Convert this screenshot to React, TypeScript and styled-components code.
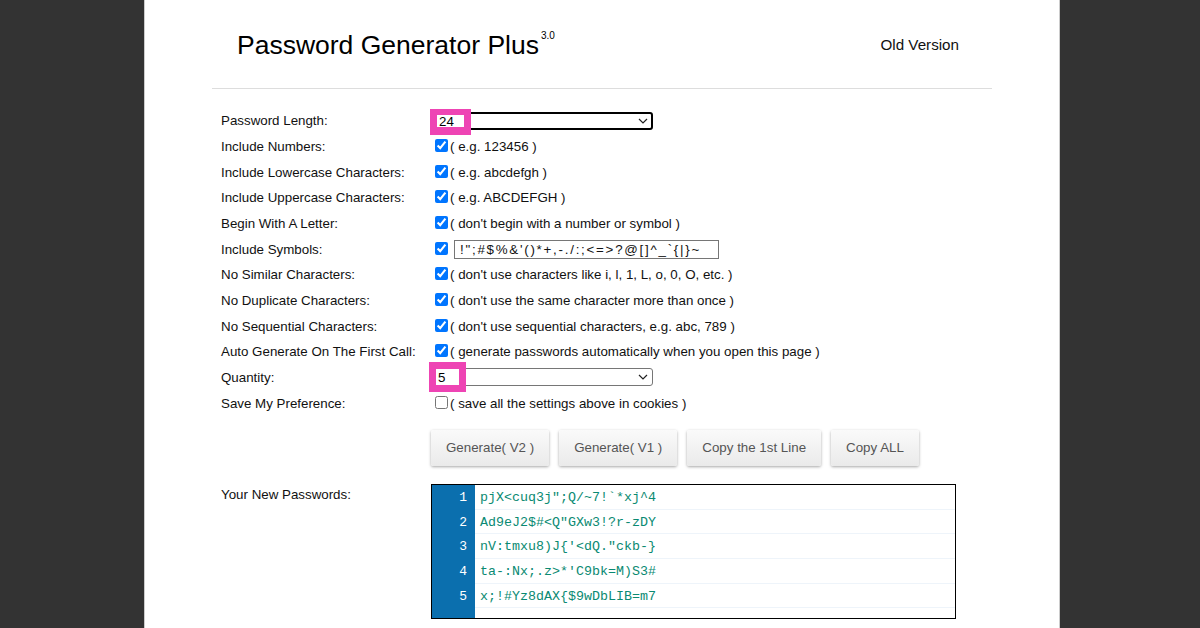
import styled, { createGlobalStyle } from "styled-components";

const GlobalStyle = createGlobalStyle`
  html, body {
    margin: 0;
    height: 628px;
    overflow: hidden;
    background: #333;
  }
`;

const Page = styled.div`
  position: relative;
  width: 916px;
  height: 628px;
  margin-left: 144px;
  padding: 0 67px;
  box-sizing: border-box;
  background: #fff;
  border-left: 1px solid #ccc;
  border-right: 1px solid #ccc;
  overflow: hidden;
  font-family: "Liberation Sans", Arial, sans-serif;
  font-size: 13.33px;
  color: #111;
`;
const Header = styled.header`
  height: 89px;
  display: flex;
  justify-content: space-between;
  align-items: center;
  padding: 2px 33px 0 25px;
  box-sizing: border-box;
  border-bottom: 1px solid #ddd;
`;
const Title = styled.h1`
  margin: 0;
  font-size: 26.5px;
  font-weight: 400;
  color: #000;
  sup {
    font-size: 10px;
    vertical-align: 15px;
    line-height: 0;
    margin-left: 2px;
  }
`;
const OldLink = styled.a`
  font-size: 15.2px;
  color: #111;
  margin-bottom: 2px;
`;
const Form = styled.div`
  display: grid;
  grid-template-columns: 210px 1fr;
  grid-auto-rows: 25.67px;
  margin-top: 19px;
  padding-left: 9px;
  align-items: center;
`;
const Label = styled.div`
  white-space: nowrap;
`;
const Control = styled.label`
  display: flex;
  align-items: center;
  gap: 2px;
  padding-left: 4px;
  white-space: nowrap;
`;
const Check = styled.input.attrs({ type: "checkbox" })`
  width: 13px;
  height: 13px;
  margin: 0 0 2px;
  accent-color: #0075ff;
`;
const SelectWrap = styled.div`
  position: relative;
  width: 222px;
  height: 18px;
  margin-left: -4px;
  svg {
    position: absolute;
    right: 5px;
    top: 6px;
  }
`;
const Select = styled.select<{ $focus?: boolean }>`
  display: block;
  appearance: none;
  width: 100%;
  height: 100%;
  box-sizing: border-box;
  padding: 0;
  background: #fff;
  font: 13.33px "Liberation Sans", Arial, sans-serif;
  border-radius: 3px;
  border: ${(p) => (p.$focus ? "2px solid #000" : "1px solid #767676")};
`;
const SymbolInput = styled.input`
  width: 265px;
  height: 19px;
  box-sizing: border-box;
  margin-left: 4px;
  padding: 0 5px;
  border: 1px solid #767676;
  font: 13.33px "Liberation Sans", Arial, sans-serif;
  letter-spacing: 1.75px;
  color: #111;
`;
const Marker = styled.div<{ $x: number; $y: number; $w: number; $h: number; $border: string }>`
  position: absolute;
  left: ${(p) => p.$x}px;
  top: ${(p) => p.$y}px;
  width: ${(p) => p.$w}px;
  height: ${(p) => p.$h}px;
  box-sizing: border-box;
  display: flex;
  align-items: center;
  border: solid #ee44b4;
  border-width: ${(p) => p.$border};
  background: #fff;
  font-size: 13.33px;
  color: #000;
  padding-left: 2px;
`;
const Buttons = styled.div`
  display: flex;
  gap: 10px;
  margin: 14px 0 0 210px;
  padding-left: 9px;
`;
const Button = styled.button`
  height: 36px;
  padding: 0 15px;
  border: 0;
  border-radius: 2px;
  background: linear-gradient(#fafafa, #eaeaea);
  box-shadow: 0 1px 3px rgba(0, 0, 0, 0.35);
  font: 13.33px "Liberation Sans", Arial, sans-serif;
  color: #555;
`;
const Result = styled.div`
  display: grid;
  grid-template-columns: 210px 525px;
  margin-top: 18px;
  padding-left: 9px;
`;
const ResultLabel = styled.div`
  margin-top: 3px;
`;
const Output = styled.div`
  display: grid;
  grid-template-columns: 43px 1fr;
  height: 135px;
  box-sizing: border-box;
  border: 1px solid #000;
`;
const Gutter = styled.div`
  background: #0b6fae;
  color: #fff;
  text-align: right;
  font: 13px "Liberation Mono", monospace;
`;
const LineNo = styled.div`
  height: 24.7px;
  box-sizing: border-box;
  padding: 1px 8px 0 0;
  line-height: 24px;
`;
const Line = styled.div`
  height: 24.7px;
  box-sizing: border-box;
  padding: 1px 0 0 5px;
  border-bottom: 1px solid #eef4fa;
  font: 13.33px/23px "Liberation Mono", monospace;
  color: #0a8a72;
  white-space: pre;
`;

const rows = [
  ["Include Numbers:", "( e.g. 123456 )"],
  ["Include Lowercase Characters:", "( e.g. abcdefgh )"],
  ["Include Uppercase Characters:", "( e.g. ABCDEFGH )"],
  ["Begin With A Letter:", "( don't begin with a number or symbol )"],
];
const rows2 = [
  ["No Similar Characters:", "( don't use characters like i, l, 1, L, o, 0, O, etc. )"],
  ["No Duplicate Characters:", "( don't use the same character more than once )"],
  ["No Sequential Characters:", "( don't use sequential characters, e.g. abc, 789 )"],
  ["Auto Generate On The First Call:", "( generate passwords automatically when you open this page )"],
];
const passwords = [
  "pjX<cuq3j\";Q/~7!`*xj^4",
  "Ad9eJ2$#<Q\"GXw3!?r-zDY",
  "nV:tmxu8)J{'<dQ.\"ckb-}",
  "ta-:Nx;.z>*'C9bk=M)S3#",
  "x;!#Yz8dAX{$9wDbLIB=m7",
];

function CheckRow({ label, hint }: { label: string; hint: string }) {
  return (
    <>
      <Label>{label}</Label>
      <Control>
        <Check defaultChecked />
        {hint}
      </Control>
    </>
  );
}

function SelectBox({ focus }: { focus?: boolean }) {
  return (
    <SelectWrap>
      <Select $focus={focus} />
      <svg width="10" height="6" viewBox="0 0 10 6" fill="none">
        <path d="M1 1l4 4 4-4" stroke="#222" strokeWidth="1.2" />
      </svg>
    </SelectWrap>
  );
}

export default function App() {
  return (
    <Page>
      <GlobalStyle />
      <Header>
        <Title>
          Password Generator Plus<sup>3.0</sup>
        </Title>
        <OldLink>Old Version</OldLink>
      </Header>
      <Form>
        <Label>Password Length:</Label>
        <Control>
          <SelectBox focus />
        </Control>
        {rows.map((r) => (
          <CheckRow key={r[0]} label={r[0]} hint={r[1]} />
        ))}
        <Label>Include Symbols:</Label>
        <Control>
          <Check defaultChecked />
          <SymbolInput readOnly value={"!\";#$%&'()*+,-./:;<=>?@[]^_`{|}~"} />
        </Control>
        {rows2.map((r) => (
          <CheckRow key={r[0]} label={r[0]} hint={r[1]} />
        ))}
        <Label>Quantity:</Label>
        <Control>
          <SelectBox />
        </Control>
        <Label>Save My Preference:</Label>
        <Control>
          <Check />( save all the settings above in cookies )
        </Control>
      </Form>
      <Buttons>
        <Button>Generate( V2 )</Button>
        <Button>Generate( V1 )</Button>
        <Button>Copy the 1st Line</Button>
        <Button>Copy ALL</Button>
      </Buttons>
      <Result>
        <ResultLabel>Your New Passwords:</ResultLabel>
        <Output>
          <Gutter>
            {passwords.map((_, i) => (
              <LineNo key={i}>{i + 1}</LineNo>
            ))}
          </Gutter>
          <div>
            {passwords.map((p) => (
              <Line key={p}>{p}</Line>
            ))}
          </div>
        </Output>
      </Result>
      <Marker $x={285} $y={109} $w={41} $h={26} $border="6px 7px 8px">24</Marker>
      <Marker $x={284} $y={362} $w={37} $h={30} $border="7px">5</Marker>
    </Page>
  );
}
